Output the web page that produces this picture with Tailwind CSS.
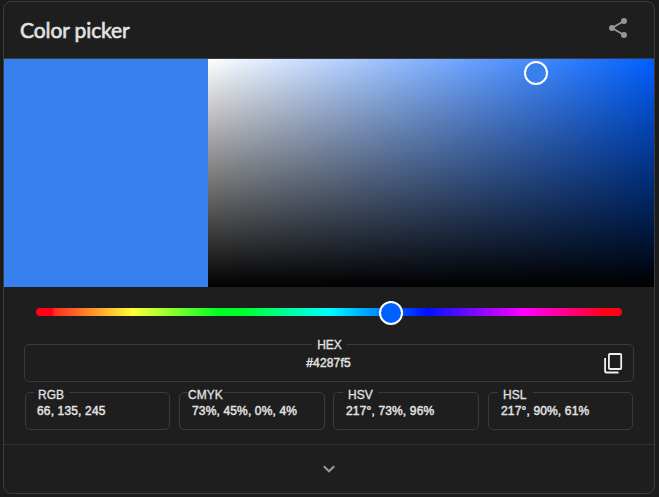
<!DOCTYPE html>
<html lang="en">
<head>
<meta charset="utf-8">
<title>Color picker</title>
<script src="https://cdn.jsdelivr.net/npm/@tailwindcss/browser@4"></script>
</head>
<body class="h-[497px] w-[659px] overflow-hidden bg-[#1c1b1b] pl-[3px] pt-px font-['Liberation_Sans',Arial,sans-serif] text-[#e2e2e2]">
<main class="flex h-[493px] w-[652px] flex-col overflow-hidden rounded-lg border border-[#3a3b3c] bg-[#1e1e1e]">
  <header class="flex h-[57px] shrink-0 items-center justify-between border-b border-[#3b3c3e] pl-4 pr-6">
    <h1 class="whitespace-nowrap font-[Lato,sans-serif] text-[21px] leading-7 tracking-[-0.1px] [-webkit-text-stroke:0.6px_#e2e2e2]">Color picker</h1>
    <button aria-label="Share" class="-mt-1 mr-[3px] text-[#969696]">
      <svg class="block h-5 w-[18px]" viewBox="0 0 18 20" fill="currentColor"><path d="M3 10 15 3M3 10l12 7" stroke="currentColor" stroke-width="2"/><circle cx="3" cy="10" r="3"/><circle cx="15" cy="3" r="3"/><circle cx="15" cy="17" r="3"/></svg>
    </button>
  </header>
  <section class="flex h-[228px] shrink-0">
    <div class="w-[204px] bg-[#3880ee]"></div>
    <div class="relative flex-1 bg-[linear-gradient(to_top,#000,transparent),linear-gradient(to_right,#fff,#005fff)]">
      <span class="absolute left-[316px] top-[2px] size-6 rounded-full border-2 border-white bg-[#3880ee]"></span>
    </div>
  </section>
  <section class="flex h-[158px] shrink-0 flex-col border-b border-[#303134] px-5 pt-[21px]">
    <div class="relative ml-3 h-2 w-[586px] shrink-0 rounded-full bg-[linear-gradient(to_right,#ff0018_0px,#ff0018_16px,#ff2a20_18px,#ffff37_97px,#00ff24_182px,#00ff2c_206px,#00ffff_293px,#0011ff_391px,#ff00ff_488px,#ff0014_570px)]">
      <span class="absolute -top-[7px] left-[343px] size-6 rounded-full border-2 border-white bg-[#005fff]"></span>
    </div>
    <div class="relative mt-7 flex h-[38px] w-[610px] shrink-0 items-center justify-center rounded-[5px] border border-[#3a3b3c] text-[12px] leading-3 [-webkit-text-stroke:0.3px_#e2e2e2]">
      <span class="absolute -top-[7px] left-[287px] w-[35px] bg-[#1e1e1e] text-center leading-[14px]">HEX</span>
      <span class="-mt-px mr-px tracking-[0.15px] [-webkit-text-stroke:0.45px_#e2e2e2]">#4287f5</span>
      <button aria-label="Copy" class="absolute left-[579px] top-[8px] text-[#f0f0f0]">
        <svg class="block h-[21px] w-[19px]" viewBox="0 0 19 21" fill="none" stroke="currentColor" stroke-width="1.8"><rect x="4.9" y="1" width="12.3" height="15" rx="1"/><path d="M1.1 5v13.5q0 1 1 1H14.5"/></svg>
      </button>
    </div>
    <div class="ml-px mt-2.5 flex gap-[9px] text-[12px] leading-[14px] [-webkit-text-stroke:0.3px_#e2e2e2]">
      <div class="relative h-[38px] w-[145px] rounded-[5px] border border-[#3a3b3c] pl-[11px] pt-[11px]"><span class="absolute -top-[5px] left-2 w-[35px] bg-[#1e1e1e] pl-1">RGB</span><span class="tracking-[0.15px] [-webkit-text-stroke:0.45px_#e2e2e2]">66, 135, 245</span></div>
      <div class="relative h-[38px] w-[146px] rounded-[5px] border border-[#3a3b3c] pl-[12px] pt-[11px]"><span class="absolute -top-[5px] left-2 w-[35px] bg-[#1e1e1e]">CMYK</span><span class="tracking-[0.15px] [-webkit-text-stroke:0.45px_#e2e2e2]">73%, 45%, 0%, 4%</span></div>
      <div class="relative -ml-px h-[38px] w-[146px] rounded-[5px] border border-[#3a3b3c] pl-[12px] pt-[11px]"><span class="absolute -top-[5px] left-[9px] w-[35px] bg-[#1e1e1e] pl-[5px]">HSV</span><span class="tracking-[0.15px] [-webkit-text-stroke:0.45px_#e2e2e2]">217°, 73%, 96%</span></div>
      <div class="relative h-[38px] w-[145px] rounded-[5px] border border-[#3a3b3c] pl-[12px] pt-[11px]"><span class="absolute -top-[5px] left-[9px] w-[35px] bg-[#1e1e1e] pl-[5px]">HSL</span><span class="tracking-[0.15px] [-webkit-text-stroke:0.45px_#e2e2e2]">217°, 90%, 61%</span></div>
    </div>
  </section>
  <footer class="flex flex-1 items-center justify-center">
    <button aria-label="Show more" class="text-[#9a9a9a]"><svg class="block h-2 w-3" viewBox="0 0 12 8" fill="none" stroke="currentColor" stroke-width="2"><path d="m.8 1.3 5.2 5 5.2-5"/></svg></button>
  </footer>
</main>
</body>
</html>
